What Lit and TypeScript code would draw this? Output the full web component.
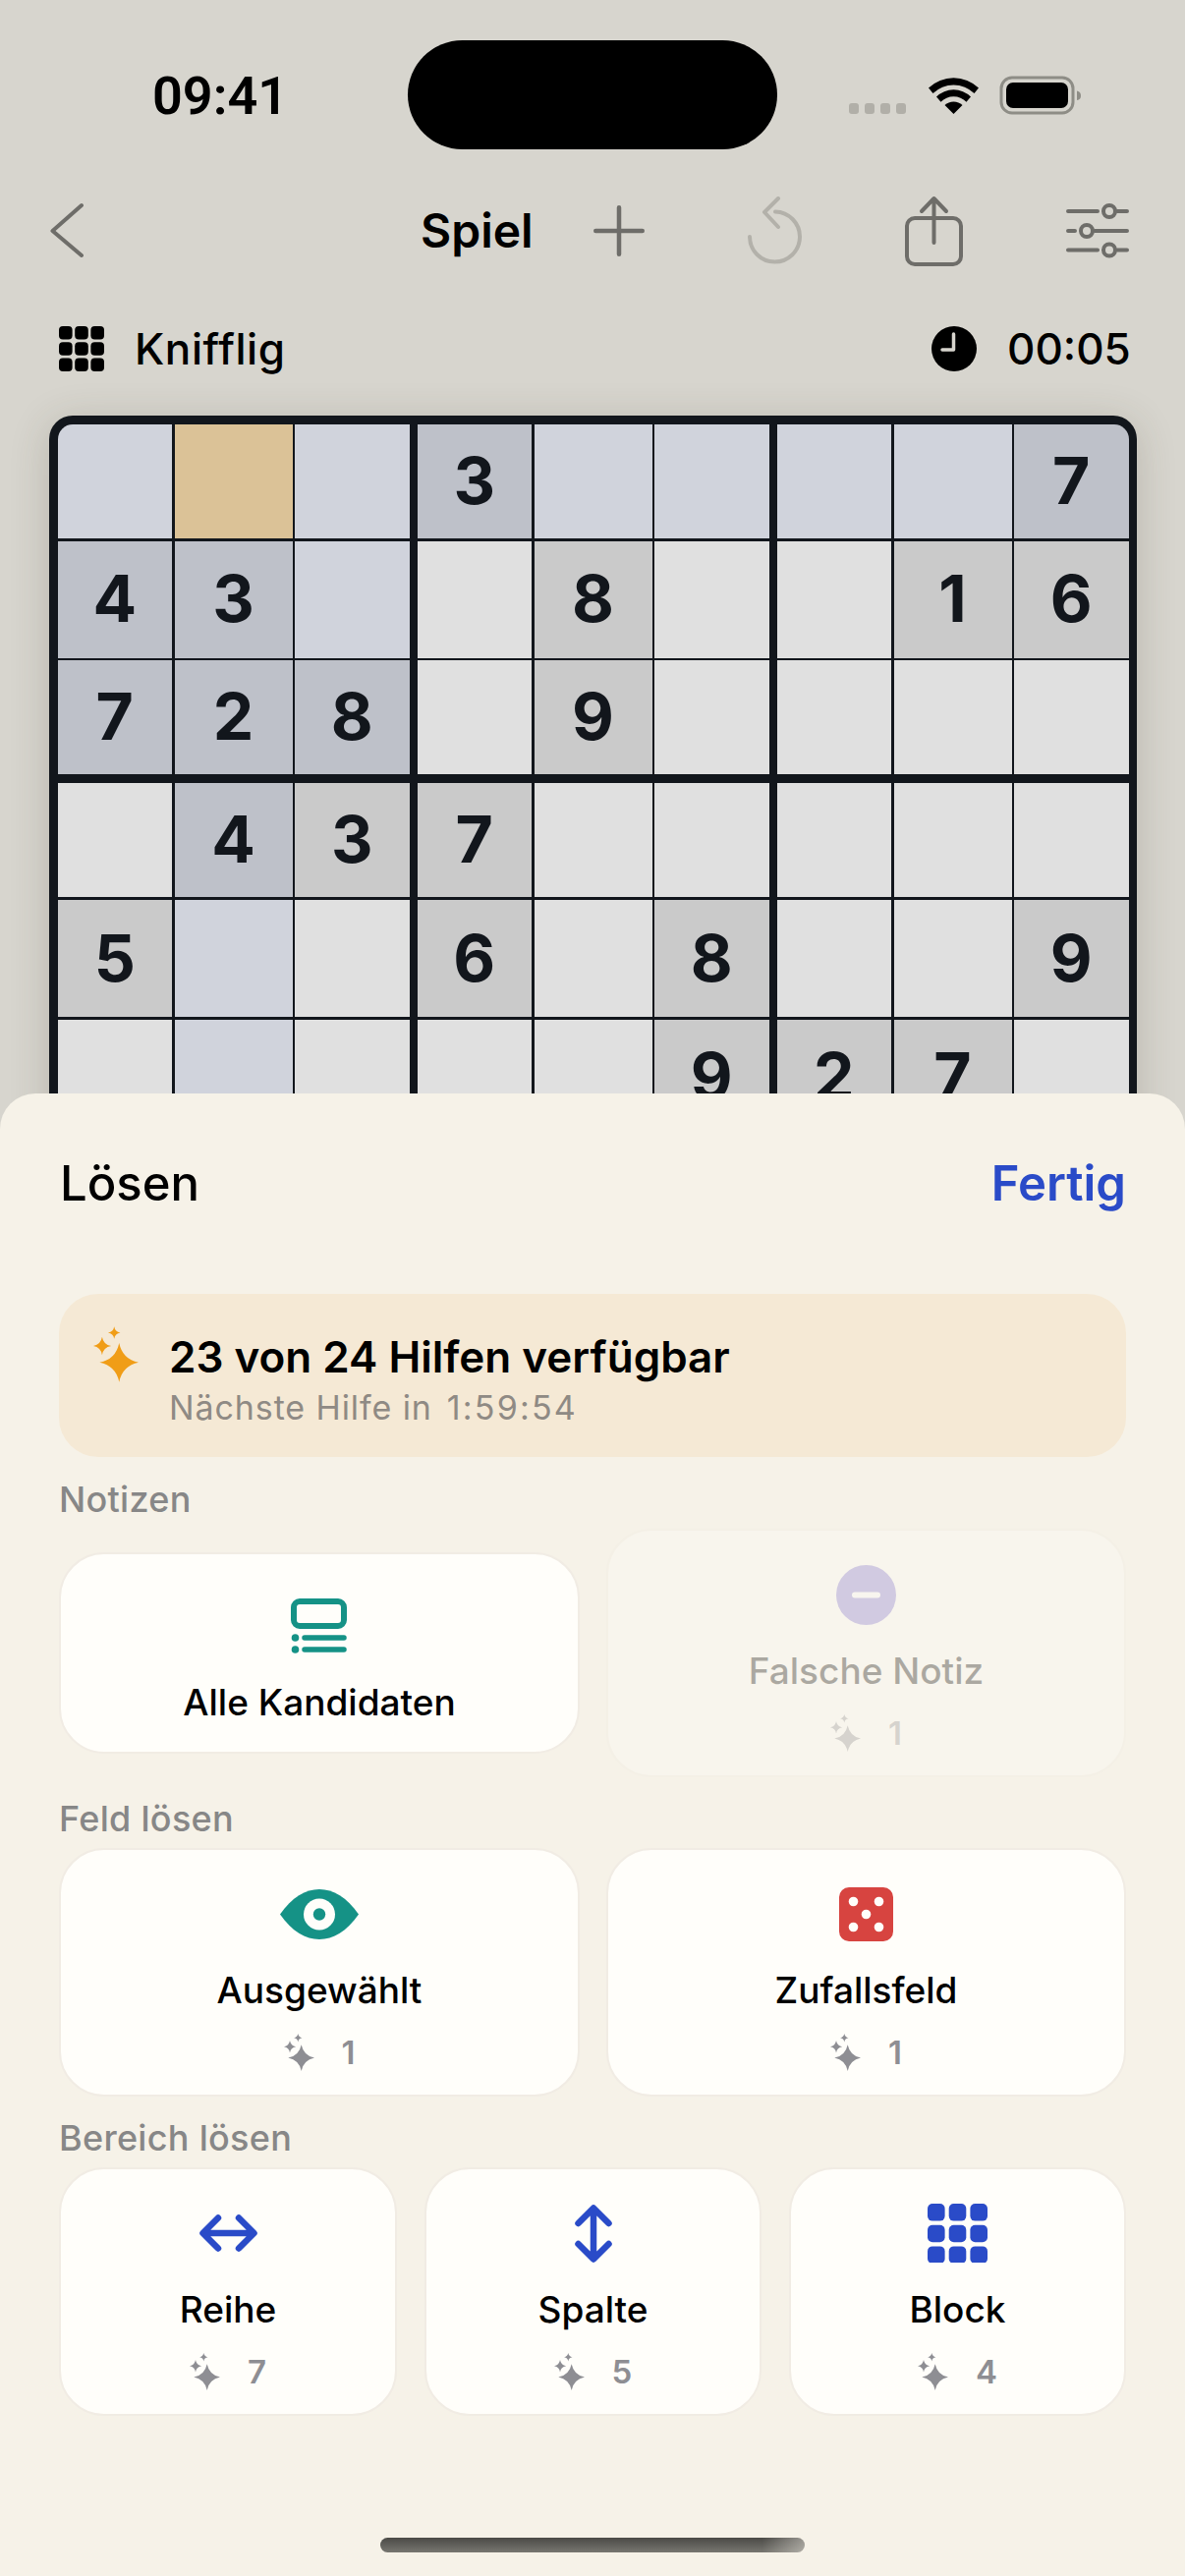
import { LitElement, html, css, svg } from "lit";
import { customElement } from "lit/decorators.js";

const rows: [string, string][] = [
  ["   3    7", "bsbdbbbbd"],
  ["43  8  16", "ddbpgppgg"],
  ["728 9    ", "dddpgpppp"],
  [" 437     ", "pdggppppp"],
  ["5  6 8  9", "gbpgpgppg"],
  ["     927 ", "pbpppgggp"],
  ["         ", "pbppppppp"],
  ["         ", "pbppppppp"],
  ["         ", "pbppppppp"],
];

function star(cx: number, cy: number, r: number, k = 0.17) {
  const c = r * k;
  return `M${cx} ${cy - r}Q${cx + c} ${cy - c} ${cx + r} ${cy}Q${cx + c} ${cy + c} ${cx} ${cy + r}Q${cx - c} ${cy + c} ${cx - r} ${cy}Q${cx - c} ${cy - c} ${cx} ${cy - r}Z`;
}
const sparklePath = star(17.7, 24.6, 13.4) + star(6, 13.3, 6.2, 0.14) + star(14.3, 4.2, 4.2, 0.14);

const sparkle = (cls: string) => html`<svg class=${cls} viewBox="0 0 31 38"><path d=${sparklePath}></path></svg>`;

const gridIcon = (w: number, p: number, rx: number) =>
  [0, 1, 2].flatMap((r) =>
    [0, 1, 2].map((c) => svg`<rect x=${c * p} y=${r * p} width=${w} height=${w} rx=${rx}></rect>`)
  );

@customElement("app-root")
export class AppRoot extends LitElement {
  static styles = css`
    :host {
      display: block;
      position: relative;
      width: 1206px;
      height: 2622px;
      overflow: hidden;
      background: #d7d5ce;
      font-family: Inter, "Liberation Sans", sans-serif;
      color: #000;
    }
    svg { display: block; flex: none; }
    .status { display: flex; align-items: center; height: 111px; margin-top: 41px; padding-left: 155px; }
    .time { font-family: Roboto, sans-serif; font-size: 54px; font-weight: 600; line-height: 60px; width: 260px; margin-top: 2px; }
    .island { width: 376px; height: 111px; border-radius: 56px; background: #000; }
    .sys { margin-left: 73px; margin-top: 1px; }
    .nav { display: flex; align-items: center; height: 80px; margin-top: 43px; padding-left: 50px; }
    .nav svg { fill: none; stroke: #6e6d69; stroke-width: 4; stroke-linecap: round; stroke-linejoin: round; }
    .nav .back { margin-right: 342px; }
    .title { font-size: 48px; font-weight: 600; line-height: 60px; width: 174px; }
    .nav .plus { margin-right: 101px; stroke-width: 4.5; }
    .nav .undo { margin-right: 102px; stroke: #b3b1aa; }
    .nav .share { margin-right: 102px; }
    .info { display: flex; align-items: center; height: 70px; margin-top: 45px; padding: 0 57px 0 60px; }
    .info svg.grid { fill: #000; }
    .level { font-size: 44px; font-weight: 500; margin-left: 31px; flex: 1; letter-spacing: 0.6px; }
    .timer { font-size: 44px; font-weight: 500; margin-left: 31px; width: 124px; white-space: nowrap; }
    .board {
      box-sizing: border-box;
      width: 1107px;
      margin: 33px 0 0 50px;
      padding: 9px 8.5px;
      border-radius: 24px;
      background: #12161c;
      box-shadow: 0 6px 40px rgba(70, 62, 45, 0.2);
    }
    .boxes { display: grid; grid-template-columns: repeat(3, 358px); gap: 9px 8px; border-radius: 15px; overflow: hidden; }
    .box { display: grid; grid-template-columns: 1fr 120px 1fr; grid-template-rows: 116px 119px 116px; gap: 2.7px 2.5px; }
    .cell {
      display: flex; align-items: center; justify-content: center;
      box-sizing: border-box; padding-bottom: 2px;
      font-size: 66px; font-weight: 700; color: #12161c; line-height: 1;
    }
    .cell.p { background: #e0e0e0; }
    .cell.g { background: #cacaca; }
    .cell.b { background: #d0d3dc; }
    .cell.d { background: #bec1c9; }
    .cell.s { background: #dbc297; }
    .sheet {
      position: absolute; left: 0; right: 0; top: 1113px; bottom: 0;
      box-sizing: border-box;
      padding: 61px 60px 0;
      background: #f6f2e8;
      border-radius: 36px 36px 0 0;
      display: flex; flex-direction: column;
    }
    .head { display: flex; justify-content: space-between; align-items: center; height: 60px; padding-left: 1px; }
    .head .h { font-size: 49px; font-weight: 500; }
    .head .done { font-size: 49px; font-weight: 600; color: #2a4bc8; }
    .banner {
      display: flex; align-items: flex-start; box-sizing: border-box;
      height: 166px; margin-top: 83px; padding: 33px 0 0 35px;
      border-radius: 40px; background: #f5e9d5;
    }
    .banner .spark { width: 46px; height: 57px; fill: #f09d17; margin-right: 31px; }
    .banner .t { font-size: 44px; font-weight: 600; line-height: 52px; margin-top: 5px; }
    .banner .u { font-size: 34px; line-height: 52px; color: #8f8a84; letter-spacing: 0.9px; }
    .banner .u span { margin-left: 15px; letter-spacing: 2.2px; }
    .sec { font-size: 36px; font-weight: 500; line-height: 40px; height: 40px; color: #878787; letter-spacing: 0.3px; margin: 23px 0 10px 0; }
    .sec.next { margin-top: 22px; }
    .row { display: grid; align-items: center; }
    .two { grid-template-columns: 530px 529px; gap: 27px; }
    .three { grid-template-columns: 344px 343px 343px; gap: 28px; }
    .card {
      box-sizing: border-box; height: 253px; padding-top: 35px;
      display: flex; flex-direction: column; align-items: center;
      background: #fffefa; border: 2px solid #f1ece4; border-radius: 46px;
    }
    .card.compact { height: 205px; padding-top: 43px; }
    .card.off { opacity: 0.3; }
    .slot { height: 60px; display: flex; align-items: center; justify-content: center; }
    .lab { font-size: 37px; font-weight: 500; line-height: 48px; margin-top: 24px; }
    .count { display: flex; align-items: center; gap: 28px; height: 40px; margin-top: 19px; color: #8e8e93; font-size: 33px; font-weight: 600; }
    .count .spark { width: 31px; height: 38px; fill: #8e8e93; }
    .home {
      align-self: center; width: 432px; height: 15px; margin-top: 124px; border-radius: 8px;
      background: linear-gradient(90deg, transparent 90%, rgba(245, 241, 232, 0.45) 100%), linear-gradient(180deg, #4b4a46, #777670);
    }
  `;

  private renderBoard() {
    const boxes = [];
    for (let br = 0; br < 3; br++) {
      for (let bc = 0; bc < 3; bc++) {
        const cells = [];
        for (let r = br * 3; r < br * 3 + 3; r++) {
          for (let c = bc * 3; c < bc * 3 + 3; c++) {
            const d = rows[r][0][c];
            const k = rows[r][1][c];
            cells.push(html`<div class="cell ${k}">${d === " " ? "" : d}</div>`);
          }
        }
        boxes.push(html`<div class="box">${cells}</div>`);
      }
    }
    return boxes;
  }

  private card(icon: unknown, label: string, n?: string, extra = "") {
    return html`<div class="card ${extra}">
      <div class="slot">${icon}</div>
      <div class="lab">${label}</div>
      ${n ? html`<div class="count">${sparkle("spark")}<span>${n}</span></div>` : ""}
    </div>`;
  }

  render() {
    const teal = "#159286";
    const blue = "#2a4bc8";
    return html`
      <div class="status">
        <div class="time">09:41</div>
        <div class="island"></div>
        <svg class="sys" width="236" height="40" viewBox="0 0 236 40">
          <g fill="#b1afa8">
            <rect x="0" y="28" width="10" height="11" rx="3"></rect>
            <rect x="16" y="28" width="10" height="11" rx="3"></rect>
            <rect x="32" y="28" width="10" height="11" rx="3"></rect>
            <rect x="48" y="28" width="10" height="11" rx="3"></rect>
          </g>
          <g fill="#000">
            <path d="M81 12.5a37 37 0 0 1 51 0l-4.5 5.5a30 30 0 0 0-42 0Z"></path>
            <path d="M89 21.500a25 25 0 0 1 35 0l-4.500 5.300a18 18 0 0 0-26 0Z"></path>
            <path d="M97.500 30a13 13 0 0 1 18 0l-9 9Z"></path>
          </g>
          <rect x="155" y="2" width="73" height="36" rx="11" fill="none" stroke="#8e8d86" stroke-width="3"></rect>
          <rect x="160" y="7" width="63" height="26" rx="7" fill="#000"></rect>
          <path d="M232 15.500c3 .5 4 2.500 4 5s-1 4-4 4.500Z" fill="#8e8d86"></path>
        </svg>
      </div>

      <div class="nav">
        <svg class="back" width="36" height="60" viewBox="0 0 36 60"><path d="M33 4 3.500 30 33 55"></path></svg>
        <div class="title">Spiel</div>
        <svg class="plus" width="56" height="56" viewBox="0 0 56 56"><path d="M4.250 28H51.750M28 4.250V51.750"></path></svg>
        <svg class="undo" width="59" height="70" viewBox="0 0 59 70">
          <path d="M4 41a25.500 25.500 0 1 0 26-25.500"></path>
          <path d="M33 2 19 16 33 31"></path>
        </svg>
        <svg class="share" width="61" height="74" viewBox="0 0 61 74">
          <rect x="3" y="24" width="55" height="47" rx="8"></rect>
          <path d="M30.500 4V49M18 17 30.500 4 43 17"></path>
        </svg>
        <svg class="sliders" width="68" height="56" viewBox="0 0 68 56">
          <path d="M4 8H34M54 8H64M4 28H11M31 28H64M4 47.500H34M54 47.500H64"></path>
          <circle cx="46" cy="8" r="6"></circle>
          <circle cx="23" cy="28" r="6"></circle>
          <circle cx="46" cy="47.500" r="6"></circle>
        </svg>
      </div>

      <div class="info">
        <svg class="grid" width="46" height="46" viewBox="0 0 46 46">${gridIcon(13.6, 16.2, 4)}</svg>
        <div class="level">Knifflig</div>
        <svg width="46" height="46" viewBox="0 0 46 46">
          <circle cx="23" cy="23" r="23" fill="#000"></circle>
          <path d="M22.500 8V24H11" fill="none" stroke="#d7d5ce" stroke-width="3.500" stroke-linecap="round" stroke-linejoin="round"></path>
        </svg>
        <div class="timer">00:05</div>
      </div>

      <div class="board"><div class="boxes">${this.renderBoard()}</div></div>

      <div class="sheet">
        <div class="head"><div class="h">Lösen</div><div class="done">Fertig</div></div>
        <div class="banner">
          ${sparkle("spark")}
          <div>
            <div class="t">23 von 24 Hilfen verfügbar</div>
            <div class="u">Nächste Hilfe in<span>1:59:54</span></div>
          </div>
        </div>

        <div class="sec">Notizen</div>
        <div class="row two">
          ${this.card(
            html`<svg width="58" height="56" viewBox="0 0 58 56">
              <rect x="3" y="3" width="51" height="25" rx="6" fill="none" stroke=${teal} stroke-width="6"></rect>
              <circle cx="4.500" cy="40" r="3.800" fill=${teal}></circle>
              <circle cx="4.500" cy="52" r="3.800" fill=${teal}></circle>
              <path d="M14 40H54M14 52H54" stroke=${teal} stroke-width="5.500" stroke-linecap="round"></path>
            </svg>`,
            "Alle Kandidaten",
            undefined,
            "compact"
          )}
          ${this.card(
            html`<svg width="61" height="61" viewBox="0 0 61 61">
              <circle cx="30.500" cy="30.500" r="30.500" fill="#7f70d2"></circle>
              <rect x="16" y="27.500" width="29" height="6" rx="3" fill="#fff"></rect>
            </svg>`,
            "Falsche Notiz",
            "1",
            "off"
          )}
        </div>

        <div class="sec next">Feld lösen</div>
        <div class="row two">
          ${this.card(
            html`<svg width="80" height="51" viewBox="0 0 80 51">
              <path d="M0 25.500C12 8 26 0 40 0S68 8 80 25.500C68 43 54 51 40 51S12 43 0 25.500Z" fill=${teal}></path>
              <circle cx="40" cy="25.500" r="16" fill="#fffefa"></circle>
              <circle cx="40" cy="25.500" r="6.200" fill=${teal}></circle>
            </svg>`,
            "Ausgewählt",
            "1"
          )}
          ${this.card(
            html`<svg width="55" height="55" viewBox="0 0 55 55">
              <rect width="55" height="55" rx="10" fill="#d74440"></rect>
              <g fill="#fffefa">
                <circle cx="14.500" cy="14.500" r="4.800"></circle>
                <circle cx="40.500" cy="14.500" r="4.800"></circle>
                <circle cx="27.500" cy="27.500" r="4.800"></circle>
                <circle cx="14.500" cy="40.500" r="4.800"></circle>
                <circle cx="40.500" cy="40.500" r="4.800"></circle>
              </g>
            </svg>`,
            "Zufallsfeld",
            "1"
          )}
        </div>

        <div class="sec next">Bereich lösen</div>
        <div class="row three">
          ${this.card(
            html`<svg width="59" height="38" viewBox="0 0 59 38" fill="none" stroke=${blue} stroke-width="6.500" stroke-linecap="round" stroke-linejoin="round">
              <path d="M19 3.500 3.500 19 19 34.500M40 3.500 55.500 19 40 34.500M4 19H55"></path>
            </svg>`,
            "Reihe",
            "7"
          )}
          ${this.card(
            html`<svg width="38" height="59" viewBox="0 0 38 59" fill="none" stroke=${blue} stroke-width="6.500" stroke-linecap="round" stroke-linejoin="round">
              <path d="M3.500 19 19 3.500 34.500 19M3.500 40 19 55.500 34.500 40M19 4V55"></path>
            </svg>`,
            "Spalte",
            "5"
          )}
          ${this.card(
            html`<svg width="61" height="60" viewBox="0 0 61 60" fill=${blue}>${gridIcon(17.6, 21.7, 5)}</svg>`,
            "Block",
            "4"
          )}
        </div>
        <div class="home"></div>
      </div>
    `;
  }
}
